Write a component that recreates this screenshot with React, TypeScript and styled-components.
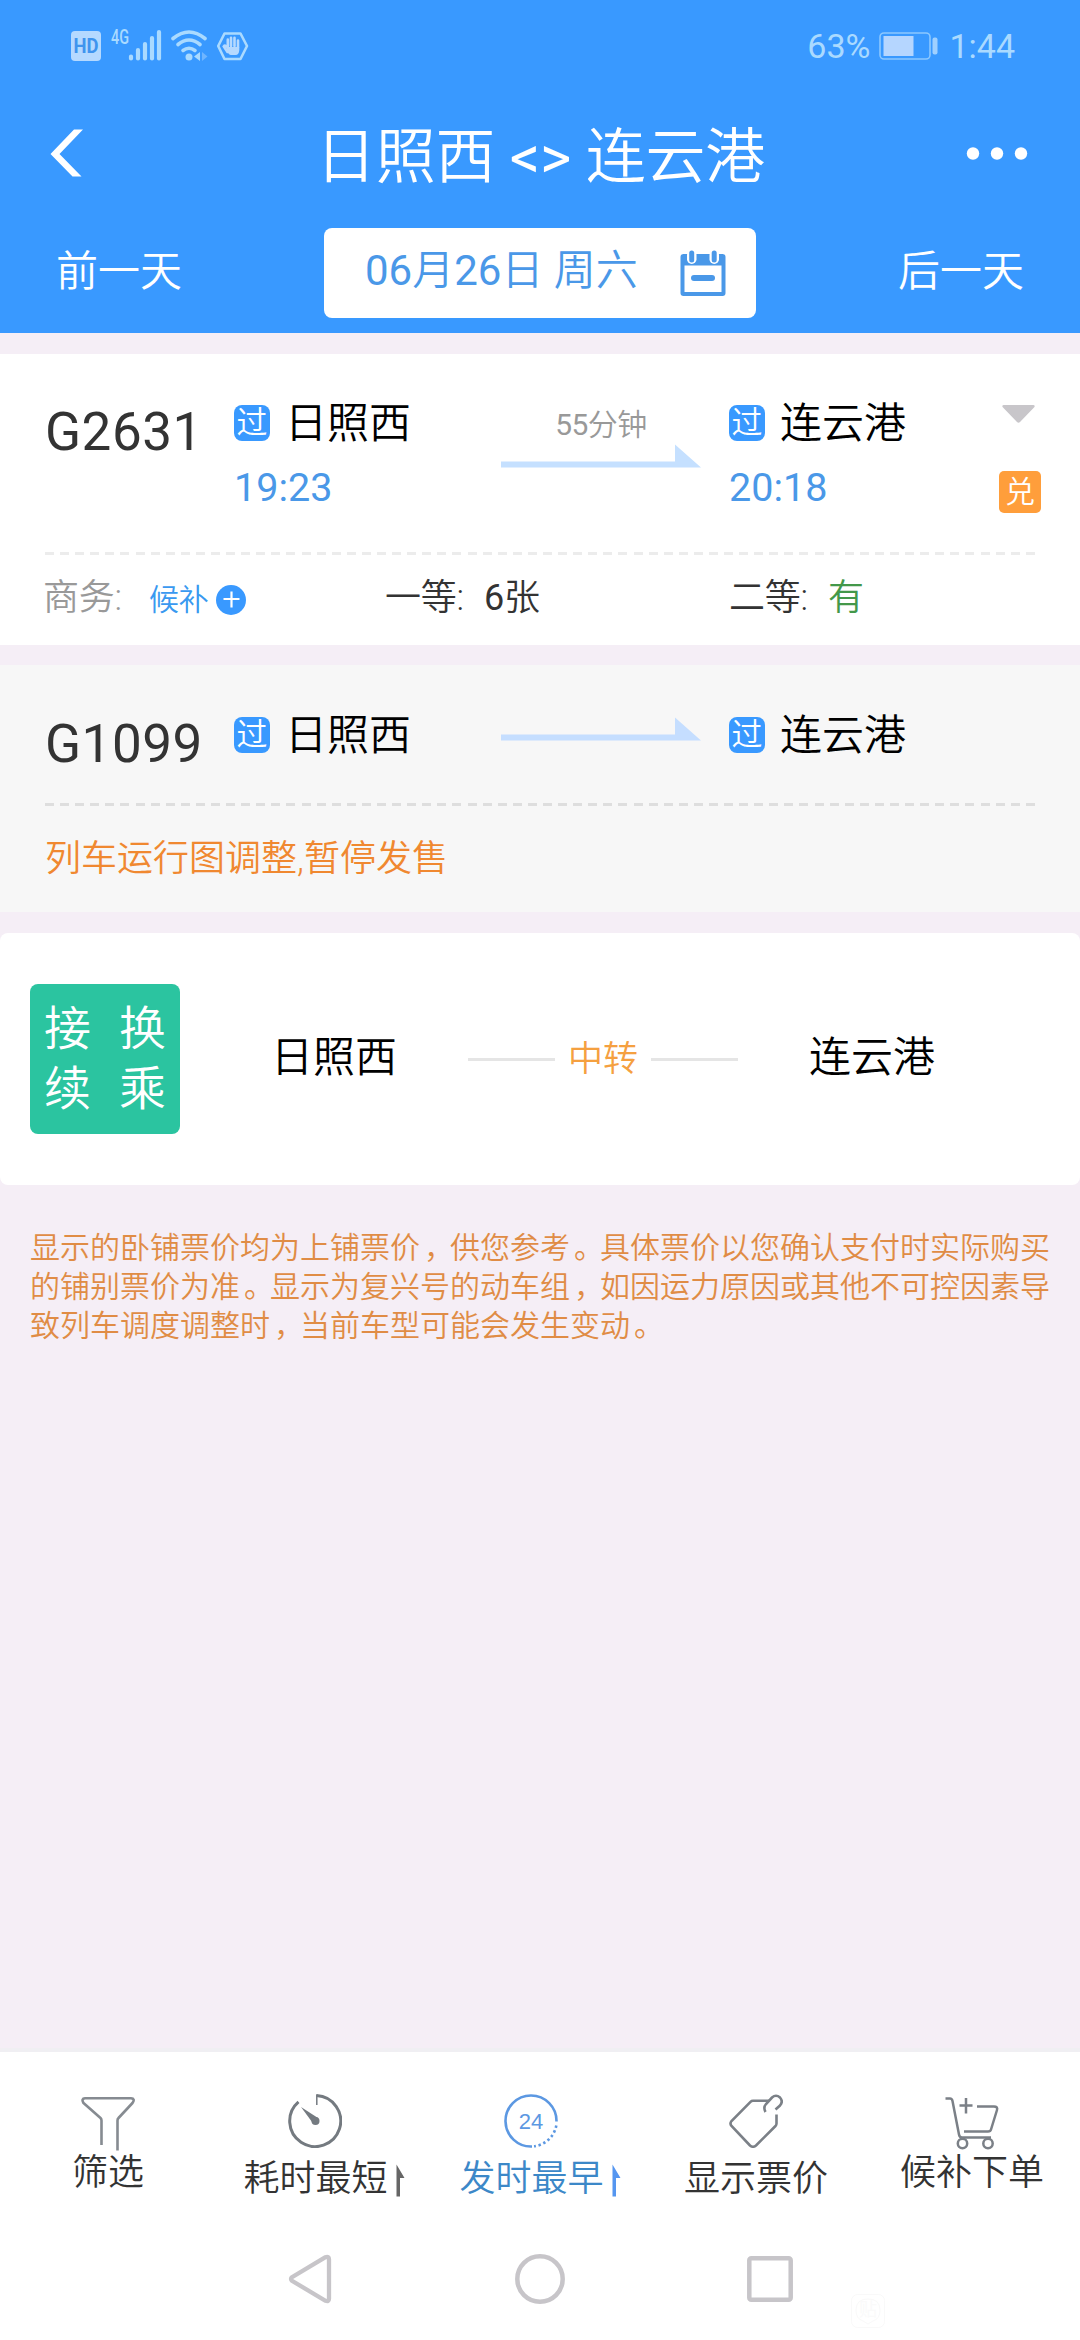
import React from 'react';
import styled, { createGlobalStyle } from 'styled-components';

const GlobalStyle = createGlobalStyle`
  * { box-sizing: border-box; }
  body { margin: 0; background: #f5eef6; }
`;

const Page = styled.div`
  position: relative;
  display: flex;
  flex-direction: column;
  width: 1080px;
  height: 2340px;
  background: #f5eef6;
  overflow: hidden;
  font-family: Roboto, 'Noto Sans CJK SC', sans-serif;
  font-weight: 400;
  white-space: nowrap;
  svg { display: block; flex: none; }
`;

const Cjk = styled.span`
  font-weight: 350;
`;

/* ---------- header ---------- */

const Header = styled.header`
  height: 333px;
  background: #3999ff;
  color: #fff;
`;

const StatusBar = styled.div`
  display: flex;
  align-items: center;
  justify-content: space-between;
  height: 92px;
  padding: 0 65px 0 71px;
  color: #aadaff;
`;

const StatusRight = styled.div`
  display: flex;
  align-items: center;
  font-size: 34px;
  line-height: 40px;
`;

const BatteryBox = styled.span`
  margin: 0 11px 0 9px;
`;

const TitleBar = styled.div`
  display: flex;
  align-items: center;
  justify-content: space-between;
  height: 122px;
  padding: 0 52px 0 50px;
`;

const Title = styled.h1`
  margin: 0;
  padding: 9px 0 0 31px;
  font-size: 60px;
  line-height: 70px;
  font-weight: 350;
  letter-spacing: -0.2px;
  b { font-weight: 400; }
`;

const DateRow = styled.div`
  display: flex;
  align-items: center;
  justify-content: space-between;
  height: 90px;
  margin-top: 14px;
  padding: 0 56px;
`;

const DayLink = styled.a`
  padding-bottom: 3px;
  font-size: 42px;
  line-height: 50px;
  font-weight: 350;
`;

const DateButton = styled.div`
  display: flex;
  align-items: center;
  justify-content: space-between;
  width: 432px;
  height: 90px;
  padding: 0 30px 0 41px;
  border-radius: 8px;
  background: #fff;
  color: #4a98e8;
  font-size: 42px;
`;

const DateText = styled.span`
  padding-bottom: 4px;
  line-height: 50px;
`;

/* ---------- train cards ---------- */

const TrainCard = styled.section<{ $muted?: boolean }>`
  margin-top: ${p => (p.$muted ? 20 : 21)}px;
  background: ${p => (p.$muted ? '#f7f7f7' : '#fff')};
  padding: ${p => (p.$muted ? '52px 39px 0 45px' : '51px 39px 0 45px')};
  height: ${p => (p.$muted ? 247 : 291)}px;
`;

const TrainTop = styled.div<{ $height: number }>`
  display: flex;
  height: ${p => p.$height}px;
`;

const TrainNo = styled.div`
  width: 189px;
  padding-top: 1px;
  color: #333;
  font-size: 53px;
  line-height: 52px;
  letter-spacing: 0.5px;
`;

const Stop = styled.div<{ $width: number }>`
  width: ${p => p.$width}px;
`;

const StationLine = styled.div`
  display: flex;
  align-items: center;
  height: 36px;
  color: #000;
  font-size: 42px;
  line-height: 40px;
  font-weight: 350;
  gap: 15px;
`;

const StationName = styled.span`
  padding-top: 2px;
`;

const PassBadge = styled.span`
  width: 36px;
  height: 36px;
  border-radius: 8px;
  background: #3999ff;
  color: #fff;
  font-size: 31px;
  line-height: 36px;
  font-weight: 350;
  text-align: center;
`;

const Time = styled.div`
  margin-top: 27px;
  color: #4a98e8;
  font-size: 39.5px;
  line-height: 40px;
`;

const ArrowColumn = styled.div`
  display: flex;
  flex-direction: column;
  align-items: center;
  width: 200px;
  margin-right: 28px;
`;

const Duration = styled.span`
  height: 39px;
  color: #999;
  font-size: 30px;
  line-height: 40px;
  letter-spacing: -0.5px;
`;

const Tail = styled.div`
  display: flex;
  flex-direction: column;
  align-items: flex-end;
  margin-left: auto;
  gap: 48px;
`;

const CaretBox = styled.span`
  margin-right: 6px;
`;

const Redeem = styled.span`
  width: 42px;
  height: 42px;
  border-radius: 5px;
  background: #ff9e3b;
  color: #fff;
  font-size: 30px;
  line-height: 41px;
  font-weight: 350;
  text-align: center;
`;

const Dashes = styled.div<{ $color: string }>`
  width: 990px;
  height: 3px;
  background: repeating-linear-gradient(90deg, ${p => p.$color} 0 9px, transparent 9px 15.09px);
`;

const Seats = styled.div`
  display: grid;
  grid-template-columns: 342px 344px 1fr;
  align-items: center;
  height: 85px;
  margin-left: -2px;
  color: #333;
  font-size: 36px;
  line-height: 44px;
  font-weight: 350;
`;

const Seat = styled.div<{ $sold?: boolean }>`
  display: flex;
  align-items: center;
  color: ${p => (p.$sold ? '#999' : '#333')};
  letter-spacing: -0.2px;
  b { font-weight: 400; }
`;

const SeatValue = styled.span<{ $ok?: boolean }>`
  margin-left: 20px;
  color: ${p => (p.$ok ? '#43984a' : 'inherit')};
`;

const Waitlist = styled.span`
  display: flex;
  align-items: center;
  gap: 7px;
  margin-left: 27px;
  padding-top: 5px;
  color: #3999f0;
  font-size: 30px;
  line-height: 36px;
`;

const Suspended = styled.p`
  margin: 31px 0 0;
  color: #f08830;
  font-size: 36px;
  line-height: 44px;
  font-weight: 350;
`;

/* ---------- transfer card ---------- */

const TransferCard = styled.section`
  display: flex;
  align-items: center;
  height: 252px;
  margin-top: 21px;
  padding-left: 30px;
  border-radius: 8px;
  background: #fff;
`;

const TransferBadge = styled.div`
  display: grid;
  grid-template-columns: 75px 75px;
  grid-template-rows: 60px 60px;
  justify-items: center;
  align-content: start;
  width: 150px;
  height: 150px;
  padding-top: 15px;
  border-radius: 8px;
  background: #2bc4a0;
  color: #fff;
  font-size: 47px;
  line-height: 60px;
  font-weight: 350;
`;

const TransferRoute = styled.div`
  display: flex;
  align-items: center;
  margin-left: 91px;
`;

const TransferStation = styled.span`
  width: 197px;
  padding-bottom: 2px;
  color: #000;
  font-size: 42px;
  line-height: 48px;
  font-weight: 350;
`;

const Rule = styled.span`
  width: 87px;
  height: 3px;
  background: #e5e5e5;
`;

const Via = styled.span`
  width: 96px;
  padding-top: 2px;
  color: #f5a040;
  font-size: 35px;
  line-height: 44px;
  font-weight: 350;
  text-align: center;
`;

const Destination = styled(TransferStation)`
  margin-left: 71px;
`;

const Notice = styled.p`
  width: 1020px;
  margin: 43px 30px 0;
  color: #e08c45;
  font-size: 30px;
  line-height: 39.2px;
  font-weight: 350;
`;

const Punct = styled.span`
  padding-left: 4px;
  margin-right: -4px;
`;

/* ---------- bottom bars ---------- */

const Bottom = styled.footer`
  margin-top: auto;
  border-top: 4px solid #f0eff3;
  background: #fff;
`;

const Tabs = styled.nav`
  display: grid;
  grid-template-columns: repeat(5, 216px);
  height: 166px;
`;

const Tab = styled.div<{ $raised?: boolean; $active?: boolean }>`
  display: flex;
  justify-content: center;
  gap: 8px;
  padding-top: ${p => (p.$raised ? 45 : 42)}px;
  color: ${p => (p.$active ? '#3c88c8' : '#333')};
`;

const TabMain = styled.div<{ $raised?: boolean }>`
  display: flex;
  flex-direction: column;
  align-items: center;
  gap: ${p => (p.$raised ? 1 : 10)}px;
`;

const TabLabel = styled.span`
  font-size: 36px;
  line-height: 42px;
  font-weight: 350;
`;

const SortBox = styled.span`
  margin-top: 70px;
`;

const SystemNav = styled.nav`
  display: grid;
  grid-template-columns: repeat(3, 230px);
  justify-content: center;
  justify-items: center;
  align-items: center;
  height: 122px;
`;

const Watermark = styled.div`
  position: absolute;
  left: 851px;
  top: 2294px;
`;

/* ---------- drawings ---------- */

const StatusIcons = () => (
  <svg width="180" height="40" viewBox="0 -3 180 40">
    <rect x="0" y="2" width="30" height="30" rx="4" fill="#b5d9ff" />
    <text x="15" y="24" textAnchor="middle" fontSize="20" fontWeight="700" fill="#3f94ee" fontFamily="Roboto" textLength="25" lengthAdjust="spacingAndGlyphs">HD</text>
    <text x="40" y="15" fontSize="20" fontWeight="500" fill="#aadaff" fontFamily="Roboto" textLength="18" lengthAdjust="spacingAndGlyphs">4G</text>
    <g stroke="#aadaff" strokeWidth="4.2" strokeLinecap="round">
      <path d="M60 27.5V29.5M67 21V29.5M74 15V29.5M81 9V29.5M88 3V29.5" />
    </g>
    <g fill="none" stroke="#aadaff" strokeWidth="3.6" strokeLinecap="round">
      <path d="M102 9.500Q118 -3.500 134 9.500" />
      <path d="M107 15.500Q118 6.500 129 15.500" />
      <path d="M112 21.500Q118 17 124 21.500" />
    </g>
    <circle cx="118" cy="28" r="3.500" fill="#aadaff" />
    <path d="M123 27.500L129 23V32Z" fill="#aadaff" />
    <path d="M131 23L136.500 27.500L131 32Z" fill="#6fb5ff" />
    <path d="M153.500 4.500H169.500L176 17L169.500 30H153.500L147.200 17Z" fill="none" stroke="#aadaff" strokeWidth="2.600" strokeLinejoin="round" />
    <path d="M156.500 23L152.800 17.500Q154 15.500 156.800 18.300V10.500M160 17V8.800M163.500 17V8.800M167 18V11.500" fill="none" stroke="#b5d9ff" strokeWidth="2.600" strokeLinecap="round" />
    <path d="M155.500 18H168.300V21Q168 26 164.500 26H160Q157.500 26 155.500 21Z" fill="#b5d9ff" />
  </svg>
);

const Battery = () => (
  <svg width="59" height="28" viewBox="0 0 59 28">
    <rect x="1" y="1" width="50" height="26" rx="4" fill="none" stroke="#8cc8ff" strokeWidth="1.600" />
    <rect x="4.500" y="4" width="30" height="20" fill="#b5d6ff" />
    <rect x="53.500" y="5.500" width="5" height="17" rx="2" fill="#9fd0ff" />
  </svg>
);

const BackIcon = () => (
  <svg width="34" height="48" viewBox="0 0 34 48">
    <path d="M24 0.500H33L9.500 25L31.500 47.500H22.500L0.500 25Z" fill="#fff" />
  </svg>
);

const MoreIcon = () => (
  <svg width="62" height="14" viewBox="0 0 62 14">
    <circle cx="7" cy="7.500" r="6.200" fill="#fff" />
    <circle cx="31" cy="7.500" r="6.200" fill="#fff" />
    <circle cx="55" cy="7.500" r="6.200" fill="#fff" />
  </svg>
);

const CalendarIcon = () => (
  <svg width="46" height="48" viewBox="0 0 46 48">
    <rect x="0.500" y="5" width="45" height="42" rx="3" fill="#4a98e8" />
    <rect x="4.500" y="16.500" width="37" height="26.500" fill="#fff" />
    <rect x="11" y="26" width="24" height="6" rx="3" fill="#4a98e8" />
    <rect x="7" y="1" width="9.500" height="14" rx="4.700" fill="#fff" />
    <rect x="29.500" y="1" width="9.500" height="14" rx="4.700" fill="#fff" />
    <rect x="9.200" y="1.500" width="5" height="12" rx="2.500" fill="#4a98e8" />
    <rect x="31.700" y="1.500" width="5" height="12" rx="2.500" fill="#4a98e8" />
  </svg>
);

const RouteArrow = ({ color }: { color: string }) => (
  <svg width="200" height="24" viewBox="0 0 200 24">
    <path d="M0 17.500H174V0.500L200 23.500H0Z" fill={color} />
  </svg>
);

const Caret = () => (
  <svg width="33" height="18" viewBox="0 0 33 18">
    <path d="M1.500 0H31.500Q34 0.500 31.500 3L18 17Q16.500 18.500 15 17L1.500 3Q-1 0.500 1.500 0Z" fill="#c8c6ca" />
  </svg>
);

const PlusDot = () => (
  <svg width="30" height="30" viewBox="0 0 30 30">
    <circle cx="15" cy="15" r="15" fill="#3999ff" />
    <path d="M15.500 6.500V22.500M7.500 14H23.500" stroke="#fff" strokeWidth="2.200" />
  </svg>
);

const FunnelIcon = () => (
  <svg width="54" height="54" viewBox="0 0 54 54" fill="none" stroke="#868b91" strokeWidth="2.600" strokeLinejoin="round">
    <path d="M20.500 48V23.500Q20.500 22 19.500 21L2.500 6Q0 1.500 4 1.300H50Q54.500 1.500 51.500 6L37.500 21Q36.500 22 36.500 23.500V53.500" />
  </svg>
);

const TimerIcon = () => (
  <svg width="54" height="54" viewBox="0 0 54 54">
    <path d="M10.500 7.800A25.500 25.500 0 1 0 28.500 1.600" fill="none" stroke="#747a80" strokeWidth="3" />
    <path d="M28.800 0.500V11" stroke="#747a80" strokeWidth="1.500" />
    <path d="M13 13L30 24L25.500 30Z" fill="#747a80" />
    <circle cx="27.500" cy="27" r="4" fill="#747a80" />
  </svg>
);

const ClockIcon = () => (
  <svg width="54" height="54" viewBox="0 0 54 54">
    <path d="M28 52.500A25.500 25.500 0 1 1 52.500 27.500" fill="none" stroke="#5c98e2" strokeWidth="2.600" />
    <path d="M52.300 31.500A25.500 25.500 0 0 1 30 52.300" fill="none" stroke="#5c98e2" strokeWidth="2.600" strokeDasharray="2.400 2.700" />
    <text x="27" y="35" textAnchor="middle" fontSize="22" fill="#5c98e2" fontFamily="Liberation Sans" fontWeight="400">24</text>
  </svg>
);

const TagIcon = () => (
  <svg width="54" height="54" viewBox="0 0 54 54" fill="none" stroke="#7b8087" strokeWidth="2.600" strokeLinecap="butt">
    <path d="M40 6.800H24Q22.500 6.800 21.500 7.800L2.500 27Q0.500 29.500 2.500 32L21 51.500Q24 54 27 51.500L46.500 32Q47.500 31 47.500 29.500V20.500" />
    <path d="M36.500 18Q34 13.500 37 10L43 3.500Q47 0 51 3.500Q54.500 7.500 51 11.500L46.500 15.500" />
  </svg>
);

const CartIcon = () => (
  <svg width="54" height="54" viewBox="0 0 54 54" fill="none" stroke="#7b8087" strokeWidth="2.500">
    <path d="M0.500 1.500H5Q7 1.500 7.500 4L14 37.500Q14.500 40.500 17 40.500H46M19 34.500H43Q45.500 34.500 46 32.500L52 13Q53 9.500 49 9.500H32M14.500 8.500H27.500M21 1V16.500" />
    <circle cx="17.500" cy="46.500" r="4.700" />
    <circle cx="43" cy="46.500" r="4.700" />
  </svg>
);

const SortArrow = ({ color }: { color: string }) => (
  <svg width="9" height="33" viewBox="0 0 9 33">
    <path d="M0.500 0.500L8.500 14H4V32.500H0.500Z" fill={color} />
  </svg>
);

const NavTriangle = () => (
  <svg width="44" height="50" viewBox="0 0 44 50">
    <path d="M37.500 3.200L4 23.200Q2 25 4 26.800L37.500 46.800Q41 48 41 44.800V5.200Q41 2 37.500 3.200Z" fill="none" stroke="#c7c5c9" strokeWidth="4.300" />
  </svg>
);

const NavCircle = () => (
  <svg width="50" height="50" viewBox="0 0 50 50">
    <circle cx="25" cy="25" r="22.700" fill="none" stroke="#c7c5c9" strokeWidth="4.500" />
  </svg>
);

const NavSquare = () => (
  <svg width="46" height="46" viewBox="0 0 46 46">
    <rect x="2.300" y="2.300" width="41.400" height="41.400" rx="2" fill="none" stroke="#c7c5c9" strokeWidth="4.500" />
  </svg>
);

const StampIcon = () => (
  <svg width="34" height="34" viewBox="0 0 34 34" fill="none" stroke="#f9f9f9" strokeWidth="1">
    <rect x="0.500" y="0.500" width="33" height="33" rx="6" />
    <path d="M12 27Q5 25 5 16Q5 5 17 5Q29 5 29 16Q29 25 22 27L17 30Z" />
    <text x="17" y="22" textAnchor="middle" fontSize="18" fill="#fafafa" stroke="none" fontFamily="Noto Sans CJK SC">贴</text>
  </svg>
);

/* ---------- parts ---------- */

const Station = ({ name }: { name: string }) => (
  <StationLine>
    <PassBadge>过</PassBadge>
    <StationName>{name}</StationName>
  </StationLine>
);

interface TabItem {
  label: string;
  icon: React.ReactNode;
  raised?: boolean;
  active?: boolean;
  sort?: string;
}

const tabs: TabItem[] = [
  { label: '筛选', icon: <FunnelIcon />, raised: true },
  { label: '耗时最短', icon: <TimerIcon />, sort: '#666' },
  { label: '发时最早', icon: <ClockIcon />, active: true, sort: '#5596f0' },
  { label: '显示票价', icon: <TagIcon /> },
  { label: '候补下单', icon: <CartIcon />, raised: true },
];

export default function App() {
  return (
    <Page>
      <GlobalStyle />
      <Header>
        <StatusBar>
          <StatusIcons />
          <StatusRight>
            <span>63%</span>
            <BatteryBox><Battery /></BatteryBox>
            <span>1:44</span>
          </StatusRight>
        </StatusBar>
        <TitleBar>
          <BackIcon />
          <Title>日照西 <b>&lt;&gt;</b> 连云港</Title>
          <MoreIcon />
        </TitleBar>
        <DateRow>
          <DayLink>前一天</DayLink>
          <DateButton>
            <DateText>06<Cjk>月</Cjk>26<Cjk>日 周六</Cjk></DateText>
            <CalendarIcon />
          </DateButton>
          <DayLink>后一天</DayLink>
        </DateRow>
      </Header>

      <TrainCard>
        <TrainTop $height={147}>
          <TrainNo>G2631</TrainNo>
          <Stop $width={267}>
            <Station name="日照西" />
            <Time>19:23</Time>
          </Stop>
          <ArrowColumn>
            <Duration>55<Cjk>分钟</Cjk></Duration>
            <RouteArrow color="#c5e0ff" />
          </ArrowColumn>
          <Stop $width={220}>
            <Station name="连云港" />
            <Time>20:18</Time>
          </Stop>
          <Tail>
            <CaretBox><Caret /></CaretBox>
            <Redeem>兑</Redeem>
          </Tail>
        </TrainTop>
        <Dashes $color="#ececec" />
        <Seats>
          <Seat $sold>
            商务:
            <Waitlist>候补<PlusDot /></Waitlist>
          </Seat>
          <Seat>一等:<SeatValue><b>6</b>张</SeatValue></Seat>
          <Seat>二等:<SeatValue $ok>有</SeatValue></Seat>
        </Seats>
      </TrainCard>

      <TrainCard $muted>
        <TrainTop $height={86}>
          <TrainNo>G1099</TrainNo>
          <Stop $width={267}>
            <Station name="日照西" />
          </Stop>
          <ArrowColumn>
            <RouteArrow color="#c5deff" />
          </ArrowColumn>
          <Stop $width={220}>
            <Station name="连云港" />
          </Stop>
        </TrainTop>
        <Dashes $color="#dedede" />
        <Suspended>列车运行图调整,暂停发售</Suspended>
      </TrainCard>

      <TransferCard>
        <TransferBadge>
          <span>接</span>
          <span>换</span>
          <span>续</span>
          <span>乘</span>
        </TransferBadge>
        <TransferRoute>
          <TransferStation>日照西</TransferStation>
          <Rule />
          <Via>中转</Via>
          <Rule />
          <Destination>连云港</Destination>
        </TransferRoute>
      </TransferCard>

      <Notice>
        显示的卧铺票价均为上铺票价<Punct>，</Punct>供您参考<Punct>。</Punct>具体票价以您确认支付时实际购买<br />
        的铺别票价为准<Punct>。</Punct>显示为复兴号的动车组<Punct>，</Punct>如因运力原因或其他不可控因素导<br />
        致列车调度调整时<Punct>，</Punct>当前车型可能会发生变动<Punct>。</Punct>
      </Notice>

      <Bottom>
        <Tabs>
          {tabs.map(t => (
            <Tab key={t.label} $raised={t.raised} $active={t.active}>
              <TabMain $raised={t.raised}>
                {t.icon}
                <TabLabel>{t.label}</TabLabel>
              </TabMain>
              {t.sort && <SortBox><SortArrow color={t.sort} /></SortBox>}
            </Tab>
          ))}
        </Tabs>
        <SystemNav>
          <NavTriangle />
          <NavCircle />
          <NavSquare />
        </SystemNav>
      </Bottom>
      <Watermark><StampIcon /></Watermark>
    </Page>
  );
}
